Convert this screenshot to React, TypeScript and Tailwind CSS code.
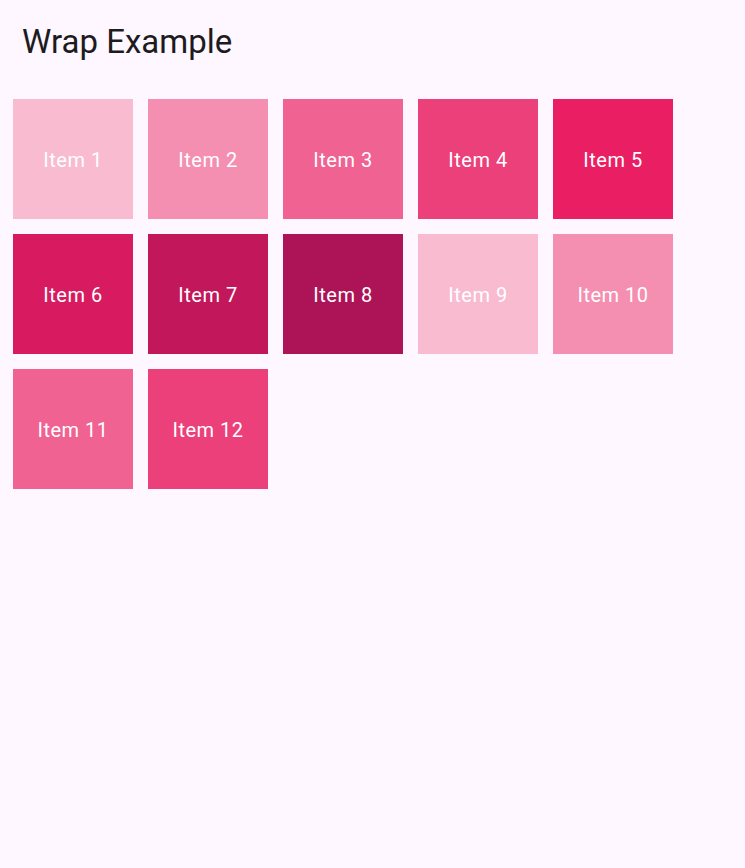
const colors = [
    "bg-[#F8BBD0]",
    "bg-[#F48FB1]",
    "bg-[#F06292]",
    "bg-[#EC407A]",
    "bg-[#E91E63]",
    "bg-[#D81B60]",
    "bg-[#C2185B]",
    "bg-[#AD1457]",
];

const items = Array.from({ length: 12 }, (_, i) => ({
    label: `Item ${i + 1}`,
    color: colors[i % colors.length],
}));

export default function App() {
    return (
        <div className="min-h-[868px] w-full bg-[#FEF7FF] font-['Roboto',sans-serif]">
            {/* Header */}
            <h1 className="pl-[22px] pt-[22px] text-[33px] leading-[40px] font-normal text-[#1D1B20]">
                Wrap Example
            </h1>

            {/* Wrapped tiles */}
            <div className="mt-[37px] flex flex-wrap gap-[15px] px-[13px]">
                {items.map((item) => (
                    <div
                        key={item.label}
                        className={`flex size-[120px] items-center justify-center pt-[2px] ${item.color}`}
                    >
                        <span className="text-[20px] tracking-[0.5px] text-white">
                            {item.label}
                        </span>
                    </div>
                ))}
            </div>
        </div>
    );
}
